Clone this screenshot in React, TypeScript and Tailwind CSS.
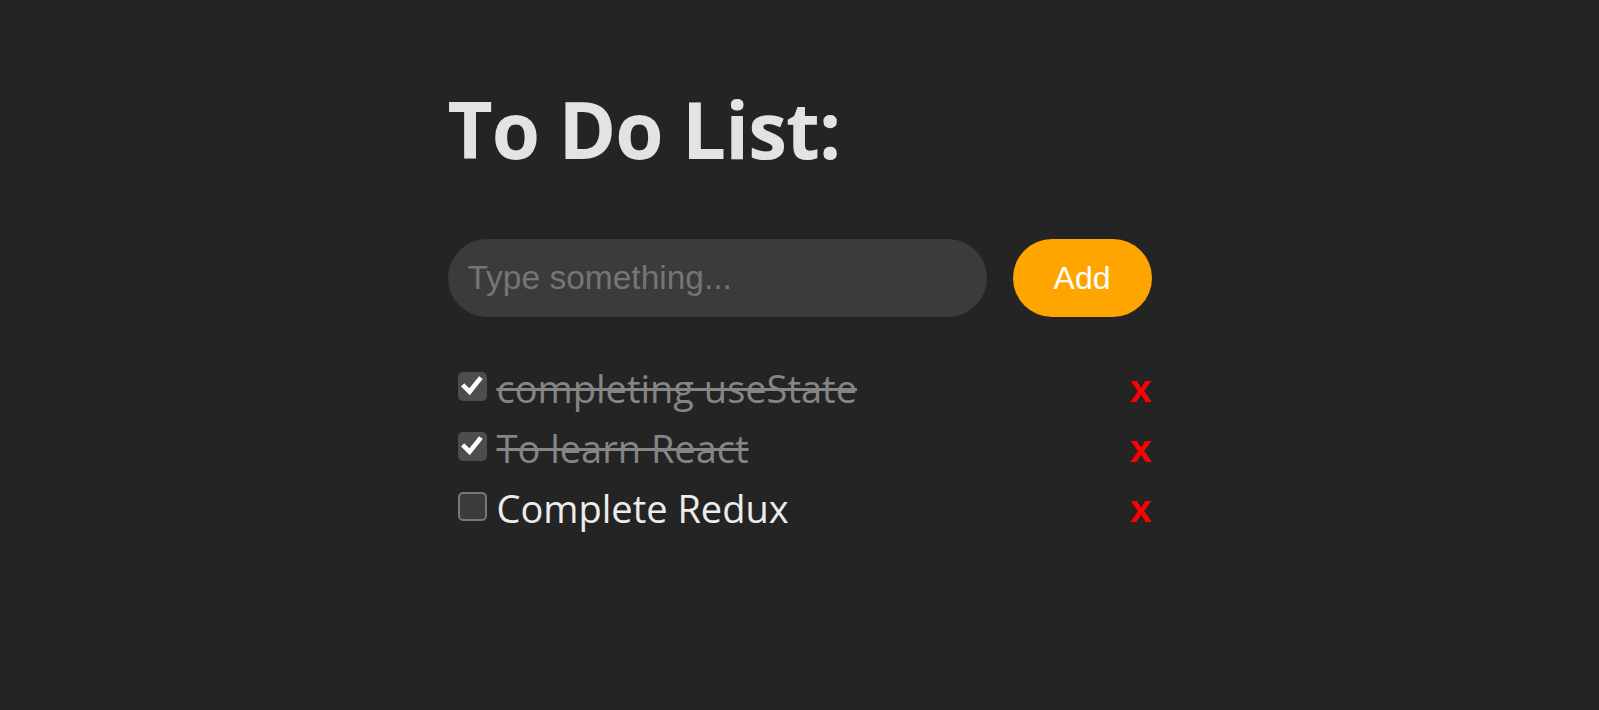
import React, { useState } from 'react';

interface Todo {
  id: number;
  text: string;
  done: boolean;
}

const initialTodos: Todo[] = [
  { id: 1, text: 'completing useState', done: true },
  { id: 2, text: 'To learn React', done: true },
  { id: 3, text: 'Complete Redux', done: false },
];

const Check: React.FC = () => (
  <svg viewBox="0 0 20 20" className="w-[22px] h-[22px]" fill="none">
    <path d="M3 10.5 L7.8 15.2 L16.8 4" stroke="white" strokeWidth="4.2" strokeLinecap="square" />
  </svg>
);

const App: React.FC = () => {
  const [todos, setTodos] = useState<Todo[]>(initialTodos);
  const [text, setText] = useState('');

  const addTodo = () => {
    if (!text.trim()) return;
    setTodos([...todos, { id: Date.now(), text, done: false }]);
    setText('');
  };

  const toggle = (id: number) =>
    setTodos(todos.map((t) => (t.id === id ? { ...t, done: !t.done } : t)));

  const remove = (id: number) => setTodos(todos.filter((t) => t.id !== id));

  return (
    <div className="min-h-screen bg-[#242424] font-['Open_Sans',sans-serif]">
      <div className="w-[704px] mx-auto pt-[90px]">
        <h1 className="text-[78px] leading-none font-bold tracking-[-0.9px] text-[#e3e3e3]">To Do List:</h1>

        <div className="flex gap-[26px] mt-[71px]">
          <input
            value={text}
            onChange={(e) => setText(e.target.value)}
            placeholder="Type something..."
            className="w-[539px] h-[78px] rounded-full bg-[#3b3b3b] pl-5 text-[33.5px] text-white placeholder:text-[#757575] outline-none font-['Liberation_Sans',Arial,sans-serif]"
          />
          <button
            onClick={addTodo}
            className="w-[139px] h-[78px] rounded-full bg-[#ffa500] text-white text-[32px] font-['Liberation_Sans',Arial,sans-serif]"
          >
            Add
          </button>
        </div>

        <ul className="mt-[39px]">
          {todos.map((todo) => (
            <li key={todo.id} className="h-[60px] flex items-center">
              <button
                onClick={() => toggle(todo.id)}
                className={
                  todo.done
                    ? 'ml-[10px] w-[29px] h-[29px] rounded-[5px] bg-[#4d4d4d] flex items-center justify-center'
                    : 'ml-[10px] w-[29px] h-[29px] rounded-[5px] bg-[#3b3b3b] border-2 border-[#777]'
                }
              >
                {todo.done && <Check />}
              </button>
              <span
                className={
                  todo.done
                    ? 'ml-[10px] pt-[4px] text-[38px] leading-none text-[#858585] line-through decoration-[3px]'
                    : 'ml-[10px] pt-[4px] text-[38px] leading-none text-[#ececec]'
                }
              >
                {todo.text}
              </span>
              <button
                onClick={() => remove(todo.id)}
                className="ml-auto pt-[4px] text-[39px] leading-none font-bold text-[#ff0000] font-['Liberation_Sans',Arial,sans-serif]"
              >
                x
              </button>
            </li>
          ))}
        </ul>
      </div>
    </div>
  );
};

export default App;
